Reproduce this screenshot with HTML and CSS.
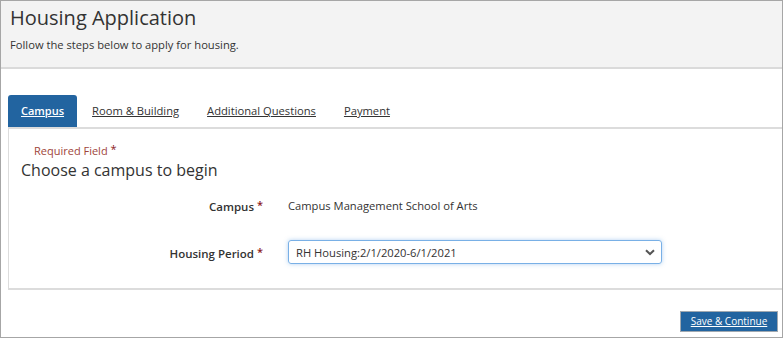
FILE: index.html
```html
<!DOCTYPE html>
<html>
  <head>
    <meta name="viewport" content="width=device-width, initial-scale=1.0">
    <title>Housing Application</title>
    <link rel="stylesheet" href="styles.css">
  </head>
  <body>
    <div class="frame">
      <header class="page-header">
        <h1 class="page-title">Housing Application</h1>
        <p class="page-sub">Follow the steps below to apply for housing.</p>
      </header>
      <main class="page-main">
        <nav class="tabs">
          <a class="tab active" href="#">Campus</a>
          <a class="tab" href="#">Room &amp; Building</a>
          <a class="tab" href="#">Additional Questions</a>
          <a class="tab" href="#">Payment</a>
        </nav>
        <div class="panel">
          <p class="required-note">Required Field <span class="star">*</span></p>
          <h2 class="panel-title">Choose a campus to begin</h2>
          <div class="form-row">
            <div class="form-label">Campus <span class="star">*</span></div>
            <div class="form-value">Campus Management School of Arts</div>
          </div>
          <div class="form-row">
            <div class="form-label">Housing Period <span class="star">*</span></div>
            <div class="select-box">
              <span>RH Housing:2/1/2020-6/1/2021</span>
              <svg class="chevron" width="10" height="7" viewBox="0 0 10 7"><path d="M1 1.2 L5 5 L9 1.2" fill="none" stroke="#555" stroke-width="2"/></svg>
            </div>
          </div>
        </div>
        <div class="actions">
          <a class="save-button" href="#">Save &amp; Continue</a>
        </div>
      </main>
    </div>
  </body>
</html>
```

FILE: styles.css
```css
* {
  box-sizing: border-box;
}

body {
  margin: 0;
  font-family: "Open Sans", "Liberation Sans", sans-serif;
  color: #333;
}

.frame {
  width: 783px;
  height: 338px;
  border: 1px solid #a6a6a6;
  background-color: #fff;
  overflow: hidden;
}

.page-header {
  height: 68px;
  background-color: #f3f3f3;
  border-bottom: 2px solid #dadada;
  padding: 3px 9px 0;
}

.page-title {
  margin: 0;
  font-size: 20px;
  font-weight: 400;
  line-height: 28px;
}

.page-sub {
  margin: 6px 0 0;
  font-size: 11.2px;
  line-height: 14px;
}

.page-main {
  padding: 26px 0 0 7px;
}

.tabs {
  display: flex;
  height: 34px;
  border-bottom: 2px solid #dcdcdc;
}

.tab {
  display: block;
  height: 32px;
  padding: 0 13px;
  margin-right: 2px;
  font-size: 11.2px;
  line-height: 32px;
  color: #333;
  text-decoration: underline;
  border-radius: 3px 3px 0 0;
}

.tab.active {
  background-color: #2264a0;
  color: #fff;
  font-weight: 600;
  font-size: 11px;
}

.panel {
  height: 161px;
  border-left: 1px solid #dcdcdc;
  border-bottom: 2px solid #dcdcdc;
  padding: 12px 0 0 12px;
}

.required-note {
  margin: 0 0 0 13px;
  font-size: 11px;
  line-height: 16px;
  color: #a0453a;
}

.star {
  color: #8b1a1a;
  font-size: 11px;
  vertical-align: 2px;
}

.panel-title {
  margin: 0;
  font-size: 16px;
  font-weight: 400;
  line-height: 22px;
}

.form-row {
  display: flex;
  align-items: center;
  height: 24px;
  margin-top: 12px;
}

.form-row + .form-row {
  margin-top: 23px;
}

.form-label {
  width: 243px;
  text-align: right;
  font-size: 11.5px;
  font-weight: 600;
  padding-right: 1px;
}

.form-value {
  margin-left: 24px;
  font-size: 11.2px;
}

.select-box {
  display: flex;
  align-items: center;
  justify-content: space-between;
  width: 374px;
  height: 24px;
  margin-left: 24px;
  padding: 0 6px 0 7px;
  border: 1px solid #79b0e6;
  border-radius: 3px;
  box-shadow: 0 0 4px rgba(102, 164, 230, 0.5);
  font-size: 11.2px;
}

.actions {
  display: flex;
  justify-content: flex-end;
  padding: 21px 4px 0 0;
}

.save-button {
  display: block;
  width: 98px;
  height: 21px;
  background-color: #2264a0;
  border: 1px solid #a0a8b0;
  color: #fff;
  font-size: 10px;
  line-height: 19px;
  text-align: center;
  text-decoration: underline;
}
```
